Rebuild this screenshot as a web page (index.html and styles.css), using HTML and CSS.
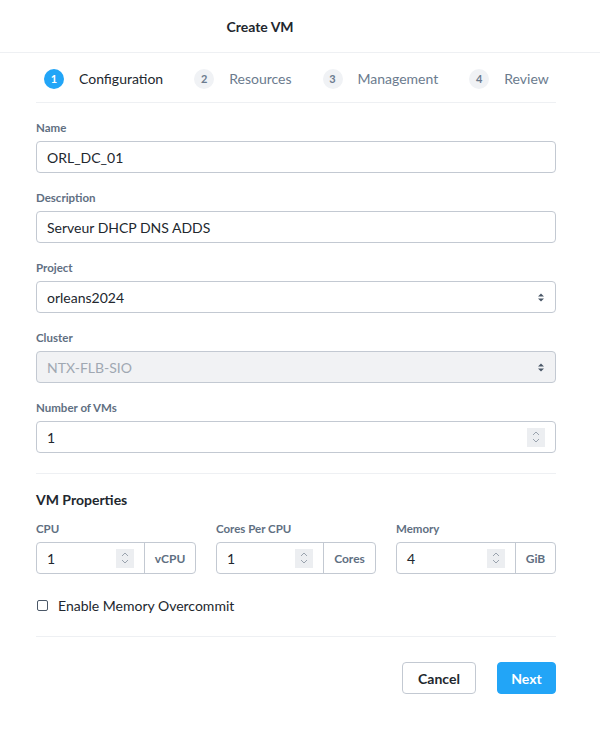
FILE: index.html
```
<!DOCTYPE html>
<html>
<head>
<meta charset="utf-8">
<link rel="stylesheet" href="styles.css">
</head>
<body>
<div class="modal">
  <div class="header"><span class="title">Create VM</span></div>
  <div class="content">
    <div class="steps">
      <div class="step active"><span class="num">1</span><span class="slabel">Configuration</span></div>
      <div class="step"><span class="num">2</span><span class="slabel">Resources</span></div>
      <div class="step"><span class="num">3</span><span class="slabel">Management</span></div>
      <div class="step"><span class="num">4</span><span class="slabel">Review</span></div>
    </div>

    <div class="field">
      <div class="label">Name</div>
      <div class="input"><span class="val">ORL_DC_01</span></div>
    </div>
    <div class="field">
      <div class="label">Description</div>
      <div class="input"><span class="val">Serveur DHCP DNS ADDS</span></div>
    </div>
    <div class="field">
      <div class="label">Project</div>
      <div class="input"><span class="val">orleans2024</span>
        <svg class="sel" width="6" height="9" viewBox="0 0 6 9"><path d="M0 3.5 L3 0.5 L6 3.5Z M0 5.5 L3 8.5 L6 5.5Z" fill="#4b5868"/></svg>
      </div>
    </div>
    <div class="field">
      <div class="label">Cluster</div>
      <div class="input disabled"><span class="val">NTX-FLB-SIO</span>
        <svg class="sel" width="6" height="9" viewBox="0 0 6 9"><path d="M0 3.5 L3 0.5 L6 3.5Z M0 5.5 L3 8.5 L6 5.5Z" fill="#4b5868"/></svg>
      </div>
    </div>
    <div class="field">
      <div class="label">Number of VMs</div>
      <div class="input"><span class="val">1</span>
        <span class="spin"><svg width="10" height="14" viewBox="0 0 10 14"><path d="M2 5 L5 2 L8 5 M2 9 L5 12 L8 9" fill="none" stroke="#9aa3ae" stroke-width="1"/></svg></span>
      </div>
    </div>

    <div class="divider"></div>

    <div class="section">VM Properties</div>
    <div class="props">
      <div class="prop">
        <div class="label">CPU</div>
        <div class="group">
          <div class="gin"><span class="val">1</span><span class="spin"><svg width="10" height="14" viewBox="0 0 10 14"><path d="M2 5 L5 2 L8 5 M2 9 L5 12 L8 9" fill="none" stroke="#9aa3ae" stroke-width="1"/></svg></span></div>
          <div class="unit u1">vCPU</div>
        </div>
      </div>
      <div class="prop">
        <div class="label">Cores Per CPU</div>
        <div class="group">
          <div class="gin"><span class="val">1</span><span class="spin"><svg width="10" height="14" viewBox="0 0 10 14"><path d="M2 5 L5 2 L8 5 M2 9 L5 12 L8 9" fill="none" stroke="#9aa3ae" stroke-width="1"/></svg></span></div>
          <div class="unit u2">Cores</div>
        </div>
      </div>
      <div class="prop">
        <div class="label">Memory</div>
        <div class="group">
          <div class="gin"><span class="val">4</span><span class="spin"><svg width="10" height="14" viewBox="0 0 10 14"><path d="M2 5 L5 2 L8 5 M2 9 L5 12 L8 9" fill="none" stroke="#9aa3ae" stroke-width="1"/></svg></span></div>
          <div class="unit u3">GiB</div>
        </div>
      </div>
    </div>

    <div class="check"><span class="box"></span><span>Enable Memory Overcommit</span></div>

    <div class="divider d2"></div>

    <div class="footer">
      <button class="btn cancel">Cancel</button>
      <button class="btn next">Next</button>
    </div>
  </div>
</div>
</body>
</html>
```
FILE: styles.css
```
* { box-sizing: border-box; }
html, body { margin: 0; padding: 0; background: #fff; }
body { font-family: "Lato", "Open Sans", sans-serif; color: #22272e; width: 600px; }

.header {
  height: 53px;
  border-bottom: 1px solid #eef0f3;
  display: flex;
  align-items: center;
  justify-content: center;
  padding-right: 80px;
}
.title { font-size: 14px; font-weight: 700; color: #22272e; }

.content { padding: 0 44px 0 36px; }

.steps {
  display: flex;
  align-items: center;
  gap: 31px;
  height: 50px;
  padding-left: 8px;
  padding-top: 2px;
  border-bottom: 1px solid #eef0f3;
}
.step { display: flex; align-items: center; gap: 15px; }
.num {
  width: 20px; height: 20px; border-radius: 50%;
  background: #f0f2f5; color: #6b7b8e;
  font-size: 11px; font-weight: 700;
  display: flex; align-items: center; justify-content: center;
}
.step.active .num { background: #22a5f7; color: #fff; }
.slabel { font-size: 14px; color: #6b7b8e; }
.step.active .slabel { color: #22272e; }

.field { margin-top: 18px; }
.field + .field { margin-top: 18px; }
.label { font-size: 11.5px; font-weight: 700; color: #5f6f82; height: 14px; line-height: 14px; margin-bottom: 6px; }
.input {
  height: 32px;
  border: 1px solid #c3c9d2;
  border-radius: 4px;
  display: flex; align-items: center;
  padding: 0 10px;
  font-size: 14px;
}
.input .val { flex: 1; }
.input.disabled { background: #f1f2f4; color: #a0a8b2; }
.sel { margin-right: 1px; }
.spin {
  width: 18px; height: 19px; background: #eceef1;
  display: flex; align-items: center; justify-content: center;
}

.divider { height: 1px; background: #eef0f3; margin-top: 20px; }

.section { font-size: 14px; font-weight: 700; margin-top: 19px; line-height: 14px; }
.props { display: flex; gap: 20px; margin-top: 15px; }
.prop { flex: 1; }
.prop .label { margin-bottom: 6px; }
.group { display: flex; height: 32px; border: 1px solid #c3c9d2; border-radius: 4px; }
.gin { flex: 1; display: flex; align-items: center; padding: 0 10px; font-size: 14px; }
.gin .val { flex: 1; }
.unit {
  border-left: 1px solid #c3c9d2;
  display: flex; align-items: center; justify-content: center;
  font-size: 12px; color: #5f6f82; font-weight: 700;
}
.u1 { width: 51px; }
.u2 { width: 52px; }
.u3 { width: 40px; }

.check { display: flex; align-items: center; gap: 10px; margin-top: 23px; font-size: 14px; padding-left: 1px; }
.box { width: 11px; height: 11px; border: 1px solid #4b5868; border-radius: 2px; }

.d2 { margin-top: 22px; }

.footer { display: flex; justify-content: flex-end; gap: 21px; margin-top: 25px; }
.btn {
  height: 32px; border-radius: 4px; font-family: "Lato", sans-serif;
  font-size: 14px; font-weight: 700;
}
.cancel { width: 74px; background: #fff; border: 1px solid #c3c9d2; color: #22272e; }
.next { width: 59px; background: #22a5f7; border: 1px solid #22a5f7; color: #fff; }
```
